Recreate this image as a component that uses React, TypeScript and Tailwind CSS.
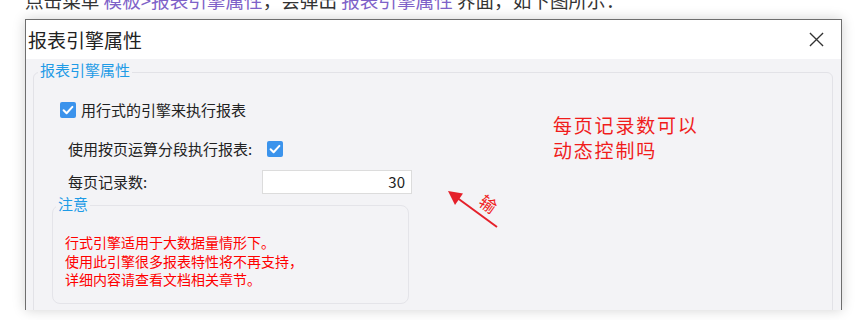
import React from "react";

function Check() {
  return (
    <span className="inline-flex w-4 h-4 shrink-0 items-center justify-center rounded-[2px] bg-[#3b93ec]">
      <svg width="16" height="16" viewBox="0 0 16 16" fill="none">
        <path d="M3.6 8.3 L6.6 11.2 L12.4 4.9" stroke="#ffffff" strokeWidth="2" strokeLinecap="round" strokeLinejoin="round" />
      </svg>
    </span>
  );
}

export default function App() {
  return (
    <div className="relative w-[867px] h-[320px] overflow-hidden bg-white font-['Noto_Sans_CJK_SC','Noto_Sans',sans-serif]">
      <p className="-mt-[12px] pl-[25px] text-[18.6px] leading-[24px] text-[#333] whitespace-nowrap">
        点击菜单 <span className="text-[#7e62c8]">模板&gt;报表引擎属性</span>，会弹出 <span className="text-[#7e62c8]">报表引擎属性</span> 界面，如下图所示：
      </p>

      <div className="ml-[25px] mt-[7px] w-[817px] h-[291px] flex flex-col border-x border-t border-[#6e6e6e] shadow-[0_0_12px_rgba(0,0,0,0.18)] overflow-hidden">
        <div className="h-[39px] shrink-0 bg-white flex items-center justify-between pl-[2px] pr-[17px]">
          <span className="text-[19px] leading-[24px] text-[#222]">报表引擎属性</span>
          <svg width="15" height="15" viewBox="0 0 16 16" fill="none">
            <path d="M1 1 L15 15 M15 1 L1 15" stroke="#333" strokeWidth="1.4" />
          </svg>
        </div>

        <div className="flex-1 bg-[#f3f3f6] pt-[1px] pl-[7px] pr-[8px]">
          <fieldset className="h-[270px] min-w-0 border border-[#e2e2e7] rounded-[6px]">
            <legend className="ml-[4px] px-[2px] pb-[4px] text-[15px] leading-[20px] text-[#1e9be6]">报表引擎属性</legend>

            <div className="mt-[15px] h-[22px] pl-[26px] flex items-center gap-[5px] text-[15px] text-[#222]">
              <Check />
              <span>用行式的引擎来执行报表</span>
            </div>

            <div className="mt-[17px] h-[22px] pl-[34px] flex items-center text-[15px] text-[#222]">
              <span className="w-[199px] whitespace-nowrap">使用按页运算分段执行报表:</span>
              <Check />
            </div>

            <div className="mt-[10px] h-[24px] pl-[34px] flex items-center text-[15px] text-[#222]">
              <span className="w-[194px]">每页记录数:</span>
              <div className="w-[150px] h-[24px] bg-white border border-[#dcdcdc] flex items-center justify-end pr-[6px] leading-[20px]">30</div>
            </div>

            <fieldset className="ml-[18px] w-[357px] min-w-0 border border-[#e4e4e9] rounded-[8px]">
              <legend className="ml-[3px] px-[2px] pb-[2px] text-[15px] leading-[20px] text-[#1e9be6]">注意</legend>
              <div className="pt-[17px] pl-[12px] pb-[14px] text-[14px] leading-[18.5px] text-[#ff0000]">
                <p>行式引擎适用于大数据量情形下。</p>
                <p>使用此引擎很多报表特性将不再支持，</p>
                <p>详细内容请查看文档相关章节。</p>
              </div>
            </fieldset>
          </fieldset>
        </div>
      </div>

      <div className="absolute left-[553px] top-[113px] text-[19px] leading-[24.5px] tracking-[1.8px] text-[#f01c1c] whitespace-nowrap">
        <p>每页记录数可以</p>
        <p>动态控制吗</p>
      </div>

      <svg className="absolute left-[440px] top-[185px]" width="70" height="50" viewBox="0 0 70 50" fill="none">
        <path d="M57 42 L16 12" stroke="#e5202a" strokeWidth="2" />
        <path d="M8 6 L23 8.5 L15 20 Z" fill="#e5202a" />
      </svg>
      <span className="absolute left-[480px] top-[195px] w-[18px] text-[17px] leading-[18px] text-[#f01c1c] rotate-[36deg]">输</span>
    </div>
  );
}
